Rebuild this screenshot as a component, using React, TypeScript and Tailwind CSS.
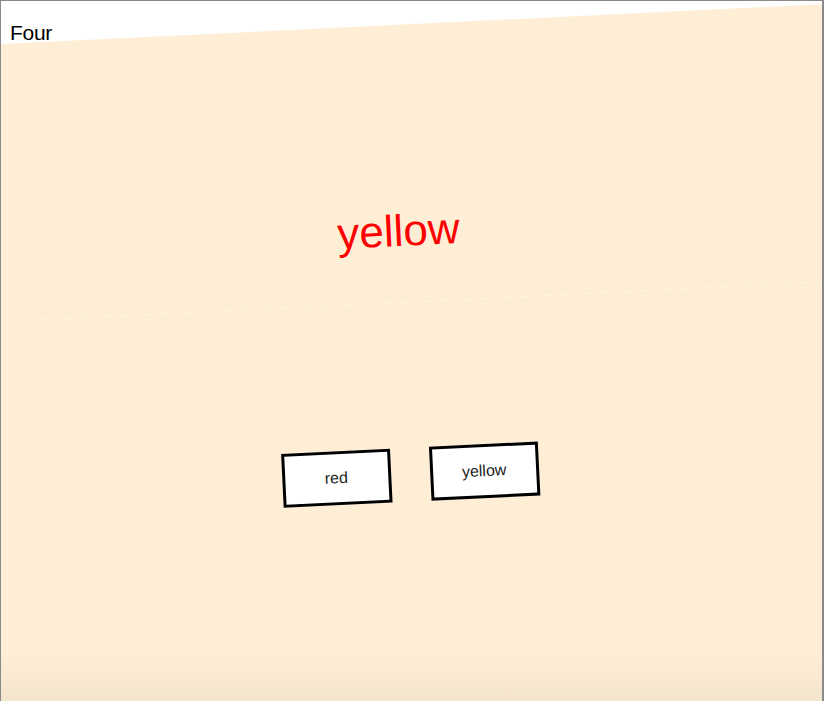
import React from "react";

export default function App() {
  return (
    <div
      className="relative w-[824px] h-[701px] overflow-hidden bg-white border-t border-l border-r-2 border-[#8a8a8a]"
      style={{ fontFamily: '"Liberation Sans", Arial, sans-serif' }}
    >
      <div className="pt-[20px] pl-[9px] text-[21px] leading-[24px] text-black h-[44px] tracking-[-0.3px]">Four</div>
      <div className="relative ml-[-42px] mt-[1px] w-[870px] h-[760px] bg-[#feeed5] origin-top-left rotate-[-2.77deg] flex flex-col items-center pr-[10px]">
        <div className="absolute top-[277px] left-[70px] right-0 h-px bg-[repeating-linear-gradient(90deg,rgba(255,255,255,0.55)_0_8px,transparent_8px_20px)]" />
        <div className="pt-[181px] text-[44px] leading-[50px] text-[#ff0000]">yellow</div>
        <div className="mt-[192px] flex gap-[39px]">
          <button className="w-[109px] h-[54px] border-[3px] border-black bg-white text-[16px] text-[#222]">red</button>
          <button className="w-[109px] h-[54px] border-[3px] border-black bg-white text-[16px] text-[#222]">yellow</button>
        </div>
      </div>
      <div className="absolute inset-x-0 bottom-0 h-[48px] bg-linear-to-b from-transparent to-black/[0.04] pointer-events-none" />
    </div>
  );
}
